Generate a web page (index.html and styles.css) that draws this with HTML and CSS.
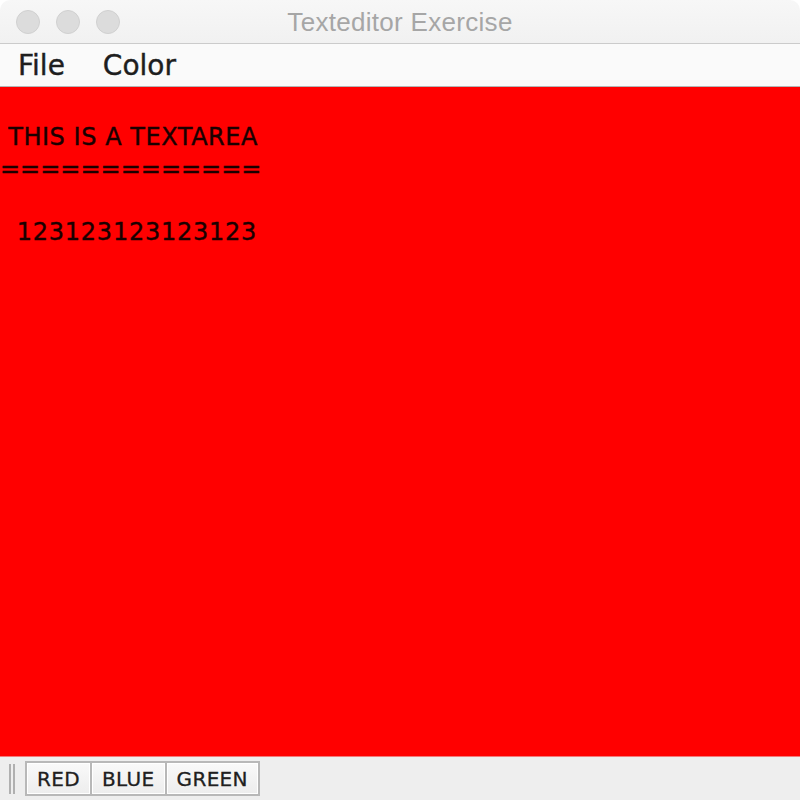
FILE: index.html
```html
<!DOCTYPE html>
<html>
<head>
<meta charset="utf-8">
<title>Texteditor Exercise</title>
<link rel="stylesheet" href="styles.css">
</head>
<body>
<div class="window">
  <div class="titlebar">
    <div class="lights">
      <span class="light"></span>
      <span class="light"></span>
      <span class="light"></span>
    </div>
    <div class="title">Texteditor Exercise</div>
  </div>
  <div class="menubar">
    <span class="menu">File</span>
    <span class="menu">Color</span>
  </div>
  <pre class="textarea"><span class="caps"> THIS IS A TEXTAREA</span>
=============

<span class="digits">  123123123123123</span></pre>
  <div class="toolbar">
    <span class="grip"></span>
    <div class="buttons">
      <button class="btn">RED</button>
      <button class="btn">BLUE</button>
      <button class="btn">GREEN</button>
    </div>
  </div>
</div>
</body>
</html>
```

FILE: styles.css
```css
html, body {
  margin: 0;
  padding: 0;
  background: #ffffff;
}

.window {
  width: 800px;
  height: 800px;
  display: flex;
  flex-direction: column;
  overflow: hidden;
  border-radius: 10px 10px 0 0;
}

.titlebar {
  height: 43px;
  flex: none;
  display: flex;
  align-items: center;
  background: linear-gradient(#f7f7f7, #f1f1f1);
  border-bottom: 1px solid #cbcbcb;
  position: relative;
}

.lights {
  display: flex;
  gap: 16px;
  padding-left: 16px;
  padding-top: 1px;
}

.light {
  width: 22px;
  height: 22px;
  border-radius: 50%;
  background: #dcdcdc;
  border: 1px solid #d0d0d0;
}

.title {
  position: absolute;
  left: 0;
  right: 0;
  top: 0;
  height: 43px;
  line-height: 44px;
  text-align: center;
  font-family: "Liberation Sans", Arial, sans-serif;
  font-size: 26px;
  letter-spacing: 0.3px;
  color: #a6a6a6;
}

.menubar {
  height: 42px;
  flex: none;
  display: flex;
  align-items: center;
  gap: 38px;
  padding-left: 18px;
  background: #fafafa;
  border-bottom: 1px solid #b4b4b4;
  font-family: "DejaVu Sans", sans-serif;
  font-size: 28px;
  color: #1e1e1e;
  -webkit-text-stroke: 0.4px #1e1e1e;
}

.menu {
  line-height: 42px;
  padding-top: 2px;
}

.textarea {
  flex: 1;
  margin: 0;
  padding: 35px 0 0 0;
  background: #ff0000;
  color: #1a0000;
  font-family: "DejaVu Sans", sans-serif;
  font-size: 24px;
  line-height: 31.67px;
  white-space: pre;
  -webkit-text-stroke: 0.4px #1a0000;
}

.caps {
  letter-spacing: 0.55px;
}

.digits {
  letter-spacing: 0.75px;
}

.toolbar {
  height: 44px;
  flex: none;
  display: flex;
  align-items: center;
  background: #eeeeee;
  border-top: 1px solid #f47a7a;
  box-sizing: border-box;
  padding-left: 9px;
}

.grip {
  width: 2px;
  height: 30px;
  border-left: 2px solid #b0b0b0;
  border-right: 2px solid #b0b0b0;
  margin-right: 10px;
}

.buttons {
  display: flex;
}

.btn {
  font-family: "DejaVu Sans", sans-serif;
  font-size: 20px;
  letter-spacing: 0.35px;
  color: #202020;
  -webkit-text-stroke: 0.3px #202020;
  height: 35px;
  padding: 0 10px;
  margin: 0 -2px 0 0;
  background: linear-gradient(#f9f9f9, #ededed);
  border: 2px solid #b8b8b8;
  box-shadow: inset 0 0 0 1px #ffffff;
  border-radius: 0;
}
```
